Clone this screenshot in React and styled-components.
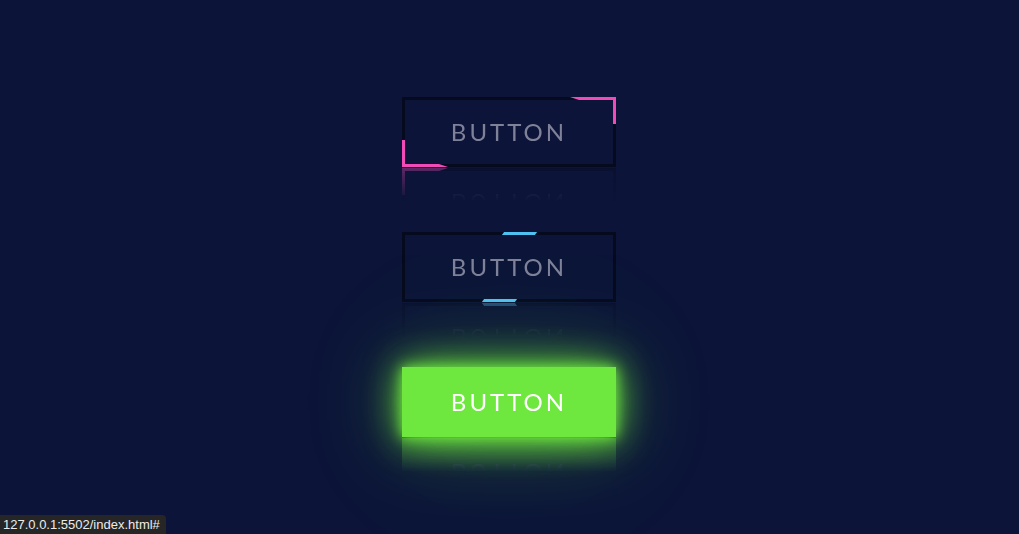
import React from 'react';
import styled, { createGlobalStyle, css } from 'styled-components';

const GlobalStyle = createGlobalStyle`
  html, body {
    margin: 0;
    padding: 0;
    background: #0c1539;
  }
  #root {
    min-height: 100vh;
  }
`;

const Page = styled.div`
  position: relative;
  height: 100vh;
  display: flex;
  flex-direction: column;
  align-items: center;
  justify-content: center;
  gap: 65px;
  padding-right: 1px;
  background: #0c1539;
  overflow: hidden;
`;

const Button = styled.a`
  position: relative;
  box-sizing: border-box;
  width: 214px;
  height: 70px;
  display: flex;
  align-items: center;
  justify-content: center;
  padding: 0 0 2px 0;
  font-family: Lato, 'Open Sans', sans-serif;
  font-size: 24px;
  letter-spacing: 3px;
  text-decoration: none;
  color: #7f8199;
  border: 3px solid #060a1e;
  -webkit-box-reflect: below 1px linear-gradient(transparent 52%, rgba(0, 0, 0, 0.35));

  ${({ $glow }) =>
    $glow &&
    css`
      border: none;
      color: #ffffff;
      background: #6ee83e;
      box-shadow: 0 0 12px #6ee83e, 0 0 36px #6ee83e, 0 0 80px rgba(110, 232, 62, 0.45),
        0 0 190px rgba(110, 232, 62, 0.08);
    `}
`;

const Corner = styled.span`
  position: absolute;
  width: 46px;
  height: 27px;
  background: #f24bb8;
  ${({ $at }) =>
    $at === 'top'
      ? css`
          top: -3px;
          right: -3px;
          clip-path: polygon(0 0, 100% 0, 100% 100%, calc(100% - 3px) 100%, calc(100% - 3px) 3px, 9px 3px);
        `
      : css`
          bottom: -3px;
          left: -3px;
          clip-path: polygon(0 0, 3px 0, 3px calc(100% - 3px), calc(100% - 9px) calc(100% - 3px), 100% 100%, 0 100%);
        `}
`;

const Dash = styled.span`
  position: absolute;
  width: 33px;
  height: 3px;
  background: #4fc1f0;
  transform: skewX(-35deg);
  ${({ $at }) =>
    $at === 'top'
      ? css`
          top: -3px;
          left: 98px;
        `
      : css`
          bottom: -3px;
          left: 78px;
        `}
`;

const StatusBar = styled.div`
  position: absolute;
  left: 0;
  bottom: 0;
  height: 19px;
  padding: 0 6px 0 3px;
  display: flex;
  align-items: center;
  background: #262626;
  border-top-right-radius: 4px;
  color: #ececec;
  font-family: 'Liberation Sans', Arial, sans-serif;
  font-size: 13px;
`;

const App = () => {
  return (
    <Page>
      <GlobalStyle />
      <Button href="#">
        <Corner $at="top" />
        <Corner $at="bottom" />
        BUTTON
      </Button>
      <Button href="#">
        <Dash $at="top" />
        <Dash $at="bottom" />
        BUTTON
      </Button>
      <Button href="#" $glow>
        BUTTON
      </Button>
      <StatusBar>127.0.0.1:5502/index.html#</StatusBar>
    </Page>
  );
};

export default App;
